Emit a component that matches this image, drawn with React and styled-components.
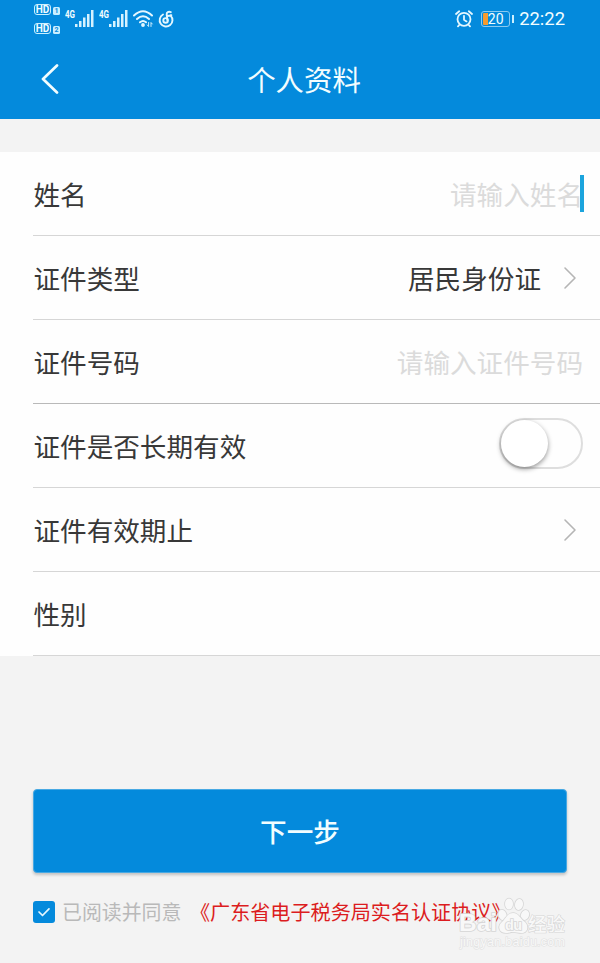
import { useState } from "react";
import styled, { createGlobalStyle } from "styled-components";

const GlobalStyle = createGlobalStyle`
  body {
    margin: 0;
    background: #f3f3f3;
    font-family: "Noto Sans CJK SC", sans-serif;
  }
  * {
    box-sizing: border-box;
  }
`;

const Page = styled.div`
  position: relative;
  width: 600px;
  height: 963px;
  overflow: hidden;
  background: #f3f3f3;
`;

const TopBar = styled.header`
  height: 119px;
  background: #048adc;
  color: #f2fdff;
`;

/* status bar */
const StatusBar = styled.div`
  height: 38px;
  padding: 0 35px 0 34px;
  display: flex;
  align-items: center;
  justify-content: space-between;
`;

const StatusGroup = styled.div`
  display: flex;
  align-items: center;
  height: 100%;
`;

const SimColumn = styled.div`
  display: flex;
  flex-direction: column;
  gap: 8px;
  margin-right: 5px;
`;

const Sim = styled.div`
  display: flex;
  align-items: flex-end;
  gap: 2px;
  height: 11px;
`;

const Hd = styled.span`
  width: 17px;
  height: 11px;
  border: 1px solid #c9efff;
  border-radius: 3px;
  font: bold 10px/9px Roboto, sans-serif;
  text-align: center;
`;

const SimNo = styled.span`
  width: 7px;
  height: 8px;
  border-radius: 1.5px;
  background: #c9efff;
  color: #048adc;
  font: bold 7px/8px Roboto, sans-serif;
  text-align: center;
`;

const Signal = styled.div`
  display: flex;
  height: 18px;
  margin-right: 5px;
`;

const Net = styled.span`
  width: 10px;
  font: bold 10px/10px Roboto, sans-serif;
  transform: scaleX(0.8);
  transform-origin: left;
`;

const Bars = styled.svg`
  width: 19px;
  height: 18px;
`;

const Icon = styled.svg`
  display: block;
  flex: none;
  fill: none;
  stroke: ${(p) => p.$color || "#e4f7ff"};
  stroke-width: ${(p) => p.$weight || 1.8};
  stroke-linecap: round;
  stroke-linejoin: round;
`;

const MusicIcon = styled(Icon)`
  margin-left: 4px;
`;

const Battery = styled.div`
  width: 29px;
  height: 16px;
  margin: 0 2px 0 8px;
  border: 1.5px solid #8ccaf0;
  border-radius: 3px;
  background: linear-gradient(to right, #f79b2e 5px, transparent 5px);
  background-origin: content-box;
  background-clip: content-box;
  padding: 1px;
  font: 14px/12px Roboto, sans-serif;
  text-align: center;
`;

const BatteryTip = styled.span`
  width: 2px;
  height: 8px;
  margin-right: 5px;
  background: #c9efff;
`;

const Clock = styled.span`
  font: 18.4px/20px Roboto, sans-serif;
`;

/* title */
const TitleBar = styled.div`
  height: 81px;
  padding: 0 33px 0 41px;
  display: grid;
  grid-template-columns: 60px 1fr 60px;
  align-items: center;
`;

const Title = styled.h1`
  margin: 1px 0 0;
  font-size: 28.4px;
  font-weight: 400;
  line-height: 40px;
  text-align: center;
`;

/* form */
const Form = styled.main`
  margin-top: 33px;
  padding-left: 33px;
  background: #fefefe;
`;

const Row = styled.div`
  height: 84px;
  padding: 0 17px 0 0;
  display: flex;
  align-items: center;
  justify-content: space-between;
  border-bottom: 1px solid ${(p) => (p.$dark ? "#b9b9b9" : "#d6d6d6")};
  color: #383838;
  font-size: 26.6px;
  line-height: 40px;
`;

const Label = styled.span`
  padding-left: 0.5px;
`;

const Value = styled.div`
  display: flex;
  align-items: center;
  gap: 22px;
  padding-right: 6px;
`;

const Placeholder = styled.span`
  display: flex;
  align-items: center;
  color: #dbdbdb;
`;

const Caret = styled.span`
  width: 4px;
  height: 37px;
  margin: 0 -1px 0 -3px;
  background: #1ba4dd;
`;

const Switch = styled.button`
  width: 84px;
  height: 51px;
  margin-top: -5px;
  padding: 0;
  display: flex;
  justify-content: ${(p) => (p.$on ? "flex-end" : "flex-start")};
  border: 2px solid #dedede;
  border-radius: 26px;
  background: ${(p) => (p.$on ? "#048adc" : "#fefefe")};
`;

const Knob = styled.span`
  width: 47px;
  height: 47px;
  border-radius: 50%;
  background: #fff;
  box-shadow: 0 2px 5px rgba(0, 0, 0, 0.42);
`;

/* bottom part */
const Bottom = styled.footer`
  padding: 133px 33px 0;
`;

const NextButton = styled.button`
  display: block;
  width: 534px;
  height: 84px;
  padding: 0 0 1px;
  border: 1px solid #48a9e3;
  border-radius: 4px;
  background: #048adc;
  box-shadow: 0 2px 3px rgba(0, 0, 0, 0.2);
  color: #f2fdff;
  font-family: inherit;
  font-size: 26.6px;
  font-weight: 500;
`;

const Agreement = styled.div`
  display: flex;
  align-items: center;
  height: 30px;
  margin-top: 24px;
  white-space: nowrap;
  font-size: 20px;
  line-height: 30px;
`;

const Checkbox = styled.span`
  width: 22px;
  height: 22px;
  margin-right: 7px;
  display: flex;
  align-items: center;
  justify-content: center;
  border-radius: 3px;
  background: #048adc;
`;

const ReadText = styled.span`
  width: 128px;
  color: #b9b9b9;
  font-size: 19.9px;
`;

const Protocol = styled.span`
  color: #dc1c20;
  font-size: 20.1px;
`;

/* overlaid mark in the corner */
const Watermark = styled.div`
  position: absolute;
  left: 459px;
  top: 896px;
  width: 112px;
`;

const MarkSvg = styled.svg`
  display: block;
  overflow: visible;
  fill: #f8f8f8;
  stroke: #d6d6d6;
  stroke-width: 1.6;
  paint-order: stroke;
  font-family: "Liberation Sans", "Noto Sans CJK SC", sans-serif;
`;

function SignalIcon() {
  return (
    <Signal>
      <Net>4G</Net>
      <Bars viewBox="0 0 19 18" fill="#d5f2ff">
        <rect x="0" y="14" width="2.5" height="3" />
        <rect x="4" y="11" width="2.5" height="6" />
        <rect x="8" y="7.5" width="2.5" height="9.5" />
        <rect x="12" y="4" width="2.5" height="13" />
        <rect x="16" y="0" width="2.5" height="17" />
      </Bars>
    </Signal>
  );
}

function Arrow() {
  return (
    <Icon width="14" height="24" viewBox="0 0 14 24" $color="#b5b5b5" $weight={1.6}>
      <path d="M2 2L12 12L2 22" />
    </Icon>
  );
}

function Status() {
  return (
    <StatusBar>
      <StatusGroup>
        <SimColumn>
          <Sim><Hd>HD</Hd><SimNo>1</SimNo></Sim>
          <Sim><Hd>HD</Hd><SimNo>2</SimNo></Sim>
        </SimColumn>
        <SignalIcon />
        <SignalIcon />
        <Icon width="21" height="18" viewBox="0 0 21 18" $weight={2}>
          <path d="M1 5.5Q10 -3 19 5.5M4 9Q10 3.5 16 9M7 12.3Q10 9.8 13 12.3" />
          <circle cx="10" cy="15" r="0.9" fill="#e4f7ff" />
          <path d="M15.6 12.5v4l-1.3-1.5M18 16.5v-4l1.3 1.5" strokeWidth="0.9" />
        </Icon>
        <MusicIcon width="16" height="18" viewBox="0 0 16 18" $weight={1.9}>
          <path d="M5 4.5A6.4 6.4 0 1 0 12.6 5.6" />
          <path d="M12.8 2.2C10.6 1.2 8.4 2.2 8.7 4.4L9.4 10.4" />
          <circle cx="7.6" cy="10.4" r="2.3" />
          <path d="M8.8 6Q11 6.2 13.4 5.2" />
        </MusicIcon>
      </StatusGroup>
      <StatusGroup>
        <Icon width="18" height="18" viewBox="0 0 18 18">
          <circle cx="9" cy="9.3" r="6.5" />
          <path d="M9 5.8V9.8L11.5 11.4M1 4L4.2 1.3M17 4L13.8 1.3M4.2 15L3 16.4M13.8 15L15 16.4" />
        </Icon>
        <Battery>20</Battery>
        <BatteryTip />
        <Clock>22:22</Clock>
      </StatusGroup>
    </StatusBar>
  );
}

export default function App() {
  const [longTerm, setLongTerm] = useState(false);

  return (
    <Page>
      <GlobalStyle />
      <TopBar>
        <Status />
        <TitleBar>
          <Icon width="18" height="30" viewBox="0 0 18 30" $color="#f2fdff" $weight={2.7}>
            <path d="M16 1.5L2 15L16 28.5" />
          </Icon>
          <Title>个人资料</Title>
        </TitleBar>
      </TopBar>

      <Form>
        <Row>
          <Label>姓名</Label>
          <Placeholder>请输入姓名<Caret /></Placeholder>
        </Row>
        <Row>
          <Label>证件类型</Label>
          <Value>居民身份证<Arrow /></Value>
        </Row>
        <Row $dark>
          <Label>证件号码</Label>
          <Placeholder>请输入证件号码</Placeholder>
        </Row>
        <Row>
          <Label>证件是否长期有效</Label>
          <Switch $on={longTerm} onClick={() => setLongTerm(!longTerm)}>
            <Knob />
          </Switch>
        </Row>
        <Row>
          <Label>证件有效期止</Label>
          <Value><Arrow /></Value>
        </Row>
        <Row>
          <Label>性别</Label>
        </Row>
      </Form>

      <Bottom>
        <NextButton>下一步</NextButton>
        <Agreement>
          <Checkbox>
            <Icon width="14" height="12" viewBox="0 0 14 12" $weight={1.7}>
              <path d="M2 6L5.5 9.5L12 2.8" />
            </Icon>
          </Checkbox>
          <ReadText>已阅读并同意</ReadText>
          <Protocol>《广东省电子税务局实名认证协议》</Protocol>
        </Agreement>
      </Bottom>

      <Watermark>
        <MarkSvg width="112" height="56" viewBox="0 0 112 56">
          <text x="0" y="35" fontSize="23" fontWeight="bold" textLength="38" lengthAdjust="spacingAndGlyphs">Bai</text>
          <ellipse cx="43.5" cy="19" rx="4" ry="5.3" transform="rotate(-20 43.5 19)" />
          <ellipse cx="50" cy="8" rx="4" ry="5.5" />
          <ellipse cx="60" cy="8.5" rx="4" ry="5.5" transform="rotate(10 60 8.5)" />
          <ellipse cx="66" cy="19" rx="4" ry="5" transform="rotate(20 66 19)" />
          <path d="M54 17C48 17 47 23 43 26C38 30 40 37 47 37C51 37 51 36 54 36C57 36 59 37 62 37C69 37 70 30 66 26C61 23 60 17 54 17Z" />
          <text x="46" y="34" fontSize="14.5" fontWeight="bold" textLength="17">du</text>
          <text x="69" y="35" fontSize="18.5" fontWeight="500" strokeWidth="1.2" textLength="37">经验</text>
          <text x="1" y="50" fontSize="12.5" stroke="#e0e0e0" strokeWidth="1.1" textLength="105">jingyan.baidu.com</text>
        </MarkSvg>
      </Watermark>
    </Page>
  );
}
